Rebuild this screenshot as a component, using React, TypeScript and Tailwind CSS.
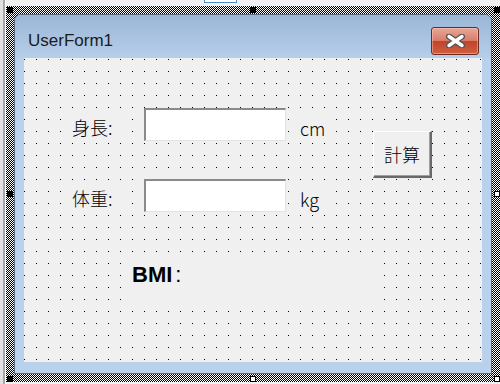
import type { ReactNode } from "react"

const jp = "font-['Noto_Sans_CJK_JP',sans-serif] font-light"

function Handle({ pos, filled }: { pos: string; filled: boolean }) {
  return (
    <div
      className={`absolute w-[6px] h-[6px] ${pos} ${
        filled ? "bg-black" : "bg-white border border-black"
      }`}
    />
  )
}

function CloseButton() {
  return (
    <div className="w-[48px] h-[28px] rounded-[3px] border border-[#6e2a20] bg-[linear-gradient(to_bottom,#eaa797_0%,#d87d69_48%,#c1432a_52%,#d0603f_100%)] shadow-[inset_0_0_0_1px_rgba(255,210,200,0.45)] flex items-center justify-center">
      <svg width="19" height="14" viewBox="0 0 19 14">
        <path d="M3 2.5 L16 11.5 M16 2.5 L3 11.5" stroke="#555" strokeWidth="6" strokeLinecap="round" fill="none" />
        <path d="M3 2.5 L16 11.5 M16 2.5 L3 11.5" stroke="#fff" strokeWidth="3.4" strokeLinecap="round" fill="none" />
      </svg>
    </div>
  )
}

// opaque label, hides the grid dots behind it
function Label({ className, children }: { className: string; children: ReactNode }) {
  return <div className={`bg-[#f0f0f0] text-black flex items-center ${className}`}>{children}</div>
}

function FieldRow({ label, unit }: { label: string; unit: string }) {
  return (
    <div className="flex items-start h-[33px]">
      <Label className={`ml-[38px] mt-[6px] w-[69px] h-[26px] pl-[10px] text-[18px] ${jp}`}>{label}</Label>
      <div className="ml-[13px] w-[142px] h-[33px] bg-white border-t-2 border-l-2 border-r border-b border-t-[#8a8a8a] border-l-[#8a8a8a] border-r-[#e3e3e3] border-b-[#e3e3e3]" />
      <Label className={`ml-[3px] mt-[10px] w-[45px] h-[20px] pl-[11px] text-[18px] leading-none ${jp}`}>{unit}</Label>
    </div>
  )
}

export default function App() {
  return (
    <div className="relative w-[500px] h-[384px] overflow-hidden bg-[#f0f0f0] flex">
      <div className="w-[6px] shrink-0 flex">
        <div className="w-[3px] bg-[#e1e1e1]" />
        <div className="w-[2px] bg-[#a8a8a8]" />
        <div className="w-[1px] bg-white" />
      </div>

      <div className="pt-[6px]">
        {/* selection frame */}
        <div className="relative w-[494px] h-[376px] p-[8px] bg-[repeating-conic-gradient(#000_0_25%,#fff_0_50%)] bg-size-[2px_2px]">
          <div className="h-full flex flex-col border border-[#56697f] rounded-t-[7px] overflow-hidden bg-[#b9d1ea]">
            <div className="h-[43px] shrink-0 flex items-end pb-[3px] pl-[13px] pr-[12px] bg-[linear-gradient(to_bottom,#9bb6d6,#b6cee9)]">
              <span className="flex-1 h-[28px] leading-[28px] text-[17px] text-[#1b1b1b] font-['Liberation_Sans',sans-serif]">
                UserForm1
              </span>
              <CloseButton />
            </div>

            <div className="flex-1 px-[9px] pb-[10px]">
              <div className="h-[304px] pt-[50px] bg-[#f0f0f0] bg-[conic-gradient(at_1px_1px,transparent_0_75%,#000_0)] bg-size-[12px_12px] bg-position-[0px_1px]">
                <div className="flex">
                  <div className="flex flex-col gap-[38px]">
                    <FieldRow label="身長:" unit="cm" />
                    <FieldRow label="体重:" unit="kg" />
                  </div>
                  <button
                    className={`ml-[39px] mt-[23px] w-[59px] h-[47px] bg-[#f0f0f0] border-t border-l border-white border-r-2 border-b-2 border-r-[#696969] border-b-[#696969] shadow-[inset_-1px_-1px_0_#a0a0a0] text-[18px] text-black ${jp}`}
                  >
                    計算
                  </button>
                </div>
                <Label className="mt-[44px] ml-[98px] w-[258px] h-[49px] pl-[10px] !items-start pt-[6px]">
                  <span className="text-[22px] leading-[26px] font-bold font-['Liberation_Sans',sans-serif]">BMI</span>
                  <span className="ml-[3px] text-[22px] leading-[26px] font-['Liberation_Sans',sans-serif]">:</span>
                </Label>
              </div>
            </div>
          </div>

          <Handle pos="left-[1px] top-[1px]" filled />
          <Handle pos="left-[244px] top-[1px]" filled />
          <Handle pos="left-[488px] top-[1px]" filled />
          <Handle pos="left-[1px] top-[185px]" filled />
          <Handle pos="left-[488px] top-[185px]" filled={false} />
          <Handle pos="left-[1px] top-[370px]" filled />
          <Handle pos="left-[244px] top-[370px]" filled={false} />
          <Handle pos="left-[488px] top-[370px]" filled={false} />
        </div>
      </div>

      <div className="absolute left-[204px] top-[-10px] w-[33px] h-[13px] border border-[#4f8fc9] bg-white" />
    </div>
  )
}
